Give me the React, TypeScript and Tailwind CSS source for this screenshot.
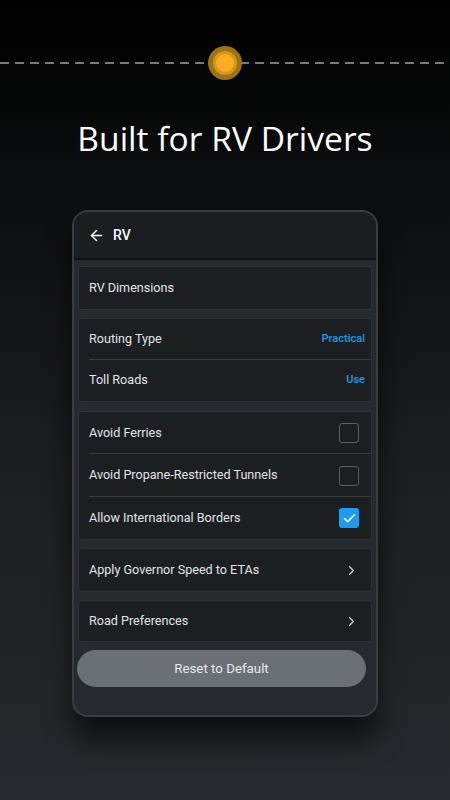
import { ArrowLeft, Check, ChevronRight } from 'lucide-react'

const font = { fontFamily: 'Roboto, "Noto Sans", sans-serif' }

function Row({
  label,
  right,
  divider,
  className = '',
}: {
  label: string
  right?: React.ReactNode
  divider?: boolean
  className?: string
}) {
  return (
    <div className={`relative flex items-center justify-between pl-[10px] pr-[6px] ${className}`}>
      <span className="text-[12.6px] text-[#e2e3e4]">{label}</span>
      {right}
      {divider && (
        <span className="absolute bottom-0 left-[10px] right-0 h-px bg-[#3a3d42]" />
      )}
    </div>
  )
}

function Box({ checked }: { checked?: boolean }) {
  return checked ? (
    <span className="flex h-[20px] w-[20px] items-center justify-center rounded-[3px] bg-[#1d9bf0] mr-[6px]">
      <Check className="h-[15px] w-[15px] text-white" strokeWidth={2.5} />
    </span>
  ) : (
    <span className="h-[20px] w-[20px] rounded-[3px] border-[1.5px] border-[#5b5e63] mr-[6px]" />
  )
}

const group = 'rounded-[3px] border border-[#2f3236] bg-[#1c1f22]'

export default function App() {
  return (
    <div
      className="relative h-[800px] w-[450px] overflow-hidden bg-[linear-gradient(180deg,#000000_0%,#0a0b0c_20%,#1c1e21_60%,#26292d_100%)]"
      style={font}
    >
      {/* Timeline marker */}
      <div className="relative h-[126px]">
        <div className="absolute left-0 right-0 top-[62px] h-[2px] bg-[repeating-linear-gradient(90deg,#7a7a7a_0_9px,transparent_9px_15px)]" />
        <div className="absolute left-[208px] top-[46px] flex h-[34px] w-[34px] items-center justify-center rounded-full bg-[#9c7314]">
          <div className="h-[24px] w-[24px] rounded-full bg-[#d9951c] flex items-center justify-center">
            <div className="h-[18px] w-[18px] rounded-full bg-[#fbac1f]" />
          </div>
        </div>
      </div>

      <h1
        className="text-center text-[33.6px] leading-[24px] text-white"
        style={{ fontFamily: '"Open Sans", "Noto Sans", sans-serif' }}
      >
        Built for RV Drivers
      </h1>

      {/* Phone card */}
      <div className="mx-auto mt-[60px] w-[306px] overflow-hidden rounded-[16px] border-2 border-[#393c41] bg-[#26292d] shadow-[0_22px_26px_rgba(0,0,0,0.6)]">
        <div className="flex h-[46px] items-center gap-[8px] bg-[#1b1e21] pl-[14px]">
          <ArrowLeft className="h-[17px] w-[17px] text-white" strokeWidth={2.2} />
          <span className="text-[14px] font-medium text-white">RV</span>
        </div>
        <div className="h-[2px] bg-[#0f1113]" />

        <div className="flex flex-col gap-[8px] px-[4px] pt-[6px] pb-[28px]">
          <div className={group}>
            <Row label="RV Dimensions" className="h-[42px]" />
          </div>

          <div className={group}>
            <Row
              label="Routing Type"
              divider
              className="h-[41px]"
              right={<span className="text-[11px] font-semibold text-[#1d95d8]">Practical</span>}
            />
            <Row
              label="Toll Roads"
              className="h-[41px]"
              right={<span className="text-[11px] font-semibold text-[#1d95d8]">Use</span>}
            />
          </div>

          <div className={`${group} mt-[1px]`}>
            <Row label="Avoid Ferries" divider className="h-[42px]" right={<Box />} />
            <Row
              label="Avoid Propane-Restricted Tunnels"
              divider
              className="h-[43px]"
              right={<Box />}
            />
            <Row label="Allow International Borders" className="h-[42px]" right={<Box checked />} />
          </div>

          <div className={group}>
            <Row
              label="Apply Governor Speed to ETAs"
              className="h-[42px]"
              right={<ChevronRight className="mr-[6px] h-[15px] w-[15px] text-[#d0d1d2]" />}
            />
          </div>

          <div className={group}>
            <Row
              label="Road Preferences"
              className="h-[40px]"
              right={<ChevronRight className="mr-[6px] h-[15px] w-[15px] text-[#d0d1d2]" />}
            />
          </div>

          <button className="mr-[6px] -ml-px flex h-[37px] items-center justify-center rounded-full bg-[#6b6f76] text-[13.3px] text-[#e8e9ea]">
            Reset to Default
          </button>
        </div>
      </div>
    </div>
  )
}
